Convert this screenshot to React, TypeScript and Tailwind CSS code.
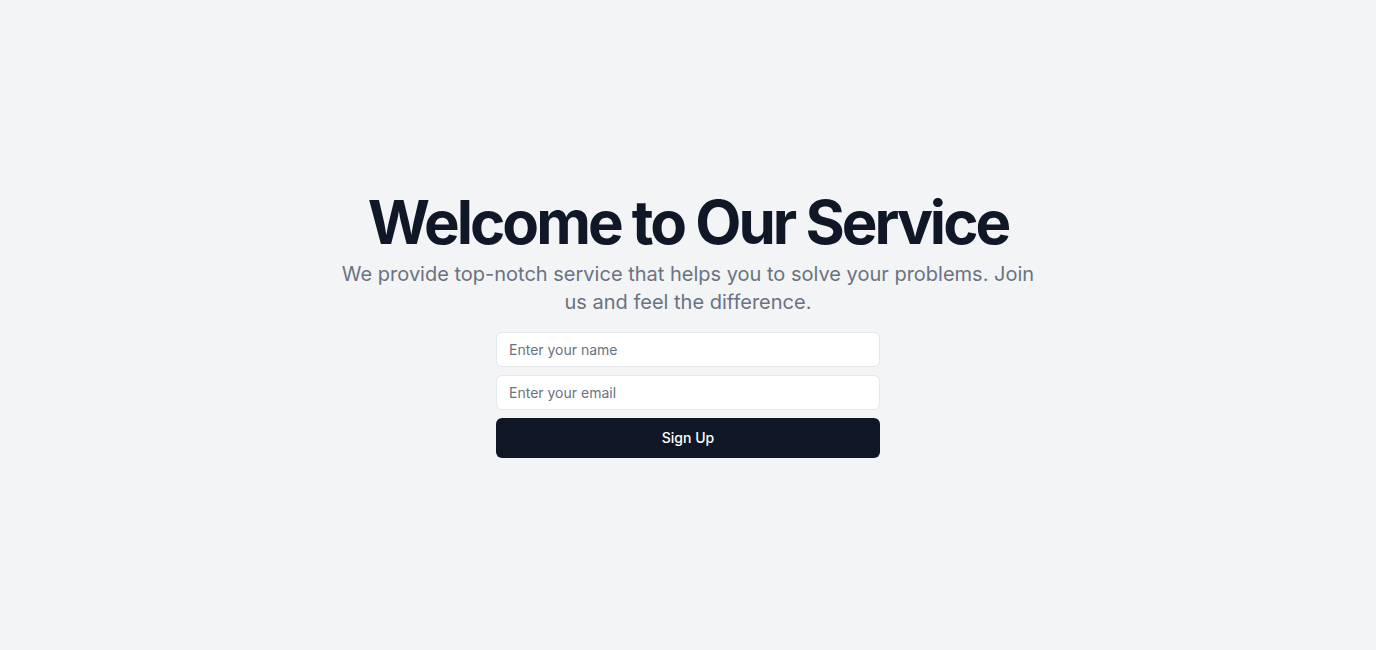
export default function App() {
  return (
    <div className="min-h-screen bg-gray-100 flex items-center justify-center" style={{ fontFamily: "Inter, 'Noto Sans', sans-serif" }}>
      <div className="flex flex-col items-center text-center">
        <h1 className="text-6xl font-bold tracking-tighter text-gray-900">Welcome to Our Service</h1>
        <p className="mt-2 max-w-[700px] text-xl text-gray-500">
          We provide top-notch service that helps you to solve your problems. Join us and feel the difference.
        </p>
        <form className="mt-4 w-96 flex flex-col gap-2" onSubmit={(e) => e.preventDefault()}>
          <input
            type="text"
            placeholder="Enter your name"
            className="h-[35px] w-full rounded-md border border-gray-200 bg-white px-3 text-sm text-gray-900 placeholder:text-gray-500 outline-none"
          />
          <input
            type="email"
            placeholder="Enter your email"
            className="h-[35px] w-full rounded-md border border-gray-200 bg-white px-3 text-sm text-gray-900 placeholder:text-gray-500 outline-none"
          />
          <button type="submit" className="h-10 w-full rounded-md bg-gray-900 text-sm font-medium text-white">
            Sign Up
          </button>
        </form>
      </div>
    </div>
  );
}
